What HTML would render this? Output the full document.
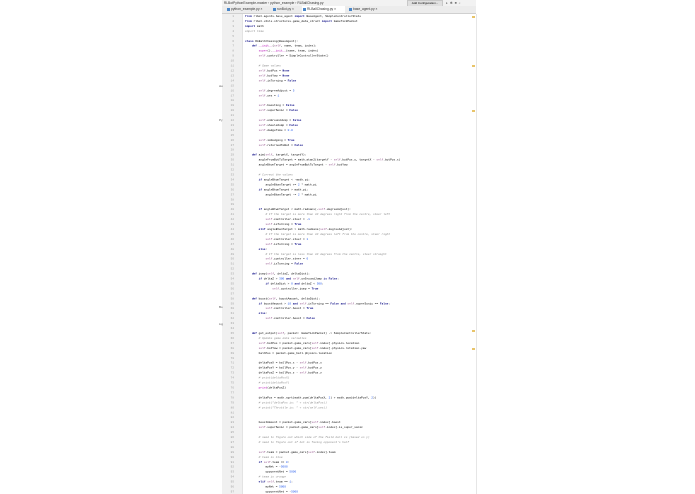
<!DOCTYPE html>
<html><head><meta charset="utf-8"><style>
body{margin:0;width:695px;height:494px;background:#fff;overflow:hidden;position:relative;font-family:"Liberation Sans",sans-serif}
.bar{position:absolute;left:222px;top:0;width:254px;height:6px;background:#f2f2f2;font-size:3.3px;line-height:6px;color:#333}
.tabs{position:absolute;left:222px;top:6px;width:254px;height:7px;background:#ececec;border-bottom:1px solid #d0d0d0;font-size:3.3px;line-height:7px}
.tab{position:absolute;top:0;height:7px;padding-left:5px;color:#333}
.tab:before{content:"";position:absolute;left:1px;top:2px;width:3px;height:3px;background:#4a86c8}
.gut{position:absolute;left:222px;top:14px;width:20px;height:480px;background:#f0f0f0;border-right:1px solid #e3e3e3}
.num{position:absolute;left:222px;top:14px;width:24px;text-align:right;font:5.6px/9.9px "Liberation Mono",monospace;color:#a0a0a0;transform:scale(0.5);transform-origin:0 0}
.code{position:absolute;left:245px;top:14px;font:5.7px/9.9px "Liberation Mono",monospace;color:#000;white-space:pre;transform:scale(0.5);transform-origin:0 0}
.k{color:#000080;font-weight:bold}.s{color:#94558d}.c{color:#8c8c8c;font-style:italic}.n{color:#1750eb}.f{color:#b200b2}.g{color:#067d17}
.edge{position:absolute;left:476px;top:14px;width:1px;height:480px;background:#e6e6e6}
.mk{position:absolute;left:472px;width:3px;height:1.5px;background:#e8c46a}
.btn{position:absolute;left:407px;top:0;width:34px;height:5px;background:#e0e0e0;border:1px solid #c8c8c8;font-size:3px;line-height:5px;text-align:center}
.lt{position:absolute;left:219px;font-size:3px;color:#555}
</style></head><body>
<div class="bar">&nbsp;&nbsp;RLBotPythonExample-master › python_example › RLBallChasing.py</div>
<div class="btn">Add Configuration...</div>
<div style="position:absolute;left:446px;top:1px;font-size:3.5px;color:#777">▸ &nbsp;✱ &nbsp;■ &nbsp;⌕</div>
<div class="tabs">
<div class="tab" style="left:4px">python_example.py ×</div>
<div class="tab" style="left:50px">runBot.py ×</div>
<div class="tab" style="left:80px;background:#fff;width:38px">RLBallChasing.py ×</div>
<div class="tab" style="left:126px">base_agent.py ×</div>
</div>
<div class="gut"></div>
<div class="edge"></div>
<div class="mk" style="top:16px"></div><div class="mk" style="top:65px"></div><div class="mk" style="top:110px"></div><div class="mk" style="top:330px"></div><div class="mk" style="top:348px"></div>
<div class="lt" style="top:84px">sto</div><div class="lt" style="top:118px">Py</div><div class="lt" style="top:305px">Bo</div><div class="lt" style="top:322px">Lig</div>
<div class="num" id="nums"></div>
<div class="code"><span class="k">from</span> rlbot.agents.base_agent <span class="k">import</span> BaseAgent, SimpleControllerState
<span class="k">from</span> rlbot.utils.structures.game_data_struct <span class="k">import</span> GameTickPacket
<span class="k">import</span> math
<span class="c">import time</span>

<span class="k">class</span> RLBallChasing(BaseAgent):
    <span class="k">def</span> <span class="f">__init__</span>(<span class="s">self</span>, name, team, index):
        <span class="f">super</span>().<span class="f">__init__</span>(name, team, index)
        <span class="s">self</span>.controller = SimpleControllerState()

        <span class="c"># Game values</span>
        <span class="s">self</span>.botPos = <span class="k">None</span>
        <span class="s">self</span>.botYaw = <span class="k">None</span>
        <span class="s">self</span>.isTurning = <span class="k">False</span>

        <span class="s">self</span>.degreeAdjust = <span class="n">5</span>
        <span class="s">self</span>.yes = <span class="n">1</span>

        <span class="s">self</span>.boosting = <span class="k">False</span>
        <span class="s">self</span>.superSonic = <span class="k">False</span>

        <span class="s">self</span>.onGroundJump = <span class="k">False</span>
        <span class="s">self</span>.shouldJump = <span class="k">False</span>
        <span class="s">self</span>.dodgeTime = <span class="n">0.0</span>

        <span class="s">self</span>.isDodging = <span class="k">True</span>
        <span class="s">self</span>.returnedToBot = <span class="k">False</span>

    <span class="k">def</span> aim(<span class="s">self</span>, targetX, targetY):
        angleFromBotToTarget = math.atan2(targetY - <span class="s">self</span>.botPos.y, targetX - <span class="s">self</span>.botPos.x)
        angleBtwnTarget = angleFromBotToTarget - <span class="s">self</span>.botYaw

        <span class="c"># Correct the values</span>
        <span class="k">if</span> angleBtwnTarget &lt; -math.pi:
            angleBtwnTarget += <span class="n">2</span> * math.pi
        <span class="k">if</span> angleBtwnTarget &gt; math.pi:
            angleBtwnTarget -= <span class="n">2</span> * math.pi


        <span class="k">if</span> angleBtwnTarget &lt; math.radians(-<span class="s">self</span>.degreeAdjust):
            <span class="c"># If the target is more than 10 degrees right from the centre, steer left</span>
            <span class="s">self</span>.controller.steer = -<span class="n">1</span>
            <span class="s">self</span>.isTurning = <span class="k">True</span>
        <span class="k">elif</span> angleBtwnTarget &gt; math.radians(<span class="s">self</span>.degreeAdjust):
            <span class="c"># If the target is more than 10 degrees left from the centre, steer right</span>
            <span class="s">self</span>.controller.steer = <span class="n">1</span>
            <span class="s">self</span>.isTurning = <span class="k">True</span>
        <span class="k">else</span>:
            <span class="c"># If the target is less than 10 degrees from the centre, steer straight</span>
            <span class="s">self</span>.controller.steer = <span class="n">0</span>
            <span class="s">self</span>.isTurning = <span class="k">False</span>

    <span class="k">def</span> jump(<span class="s">self</span>, deltaZ, deltaDist):
        <span class="k">if</span> deltaZ &gt; <span class="n">300</span> <span class="k">and</span> <span class="s">self</span>.onGroundJump <span class="k">is False</span>:
            <span class="k">if</span> deltaDist &gt; <span class="n">0</span> <span class="k">and</span> deltaZ &lt; <span class="n">500</span>:
                <span class="s">self</span>.controller.jump = <span class="k">True</span>

    <span class="k">def</span> boost(<span class="s">self</span>, boostAmount, deltaDist):
        <span class="k">if</span> boostAmount &gt; <span class="n">10</span> <span class="k">and</span> <span class="s">self</span>.isTurning == <span class="k">False and</span> <span class="s">self</span>.superSonic == <span class="k">False</span>:
            <span class="s">self</span>.controller.boost = <span class="k">True</span>
        <span class="k">else</span>:
            <span class="s">self</span>.controller.boost = <span class="k">False</span>


    <span class="k">def</span> get_output(<span class="s">self</span>, packet: GameTickPacket) -&gt; SimpleControllerState:
        <span class="c"># Update game data variables</span>
        <span class="s">self</span>.botPos = packet.game_cars[<span class="s">self</span>.index].physics.location
        <span class="s">self</span>.botYaw = packet.game_cars[<span class="s">self</span>.index].physics.rotation.yaw
        ballPos = packet.game_ball.physics.location

        deltaPosX = ballPos.x - <span class="s">self</span>.botPos.x
        deltaPosY = ballPos.y - <span class="s">self</span>.botPos.y
        deltaPosZ = ballPos.z - <span class="s">self</span>.botPos.z
        <span class="c"># print(deltaPosX)</span>
        <span class="c"># print(deltaPosY)</span>
        <span class="f">print</span>(deltaPosZ)

        deltaPos = math.sqrt(math.pow(deltaPosX, <span class="n">2</span>) + math.pow(deltaPosY, <span class="n">2</span>))
        <span class="c"># print("deltaPos is: " + str(deltaPos))</span>
        <span class="c"># print("Throttle is: " + str(self.yes))</span>


        boostAmount = packet.game_cars[<span class="s">self</span>.index].boost
        <span class="s">self</span>.superSonic = packet.game_cars[<span class="s">self</span>.index].is_super_sonic

        <span class="c"># need to figure out which side of the field ball is (based on y)</span>
        <span class="c"># need to figure out if bot is facing opponent's half</span>

        <span class="s">self</span>.team = packet.game_cars[<span class="s">self</span>.index].team
        <span class="c"># team is blue</span>
        <span class="k">if</span> <span class="s">self</span>.team == <span class="n">0</span>:
            myNet = -<span class="n">5000</span>
            opponentNet = <span class="n">5000</span>
        <span class="c"># team is orange</span>
        <span class="k">elif</span> <span class="s">self</span>.team == <span class="n">1</span>:
            myNet = <span class="n">5000</span>
            opponentNet = -<span class="n">5000</span></div>
<script>var s="";for(var i=1;i<=97;i++)s+=i+"<br>";document.getElementById("nums").innerHTML=s;</script>
</body></html>
